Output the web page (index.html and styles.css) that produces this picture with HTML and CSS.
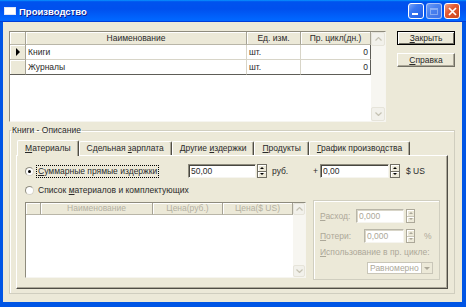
FILE: index.html
```html
<!DOCTYPE html>
<html lang="ru">
<head>
    <meta charset="UTF-8">
    <meta name="viewport" content="width=device-width, initial-scale=1.0">
    <title>Производство</title>
    <link rel="stylesheet" href="styles.css">
</head>
<body>

<div class="window">
    <div class="titlebar">
        <span class="app-icon"></span>
        <span class="title">Производство</span>
        <div class="caption-buttons">
            <span class="cap-btn cap-min"><span class="min-bar"></span></span>
            <span class="cap-btn cap-max"><span class="max-box"></span></span>
            <span class="cap-btn cap-close">
                <svg width="9" height="9" viewBox="0 0 9 9"><path d="M1 1L8 8M8 1L1 8" stroke="#fff" stroke-width="1.7"/></svg>
            </span>
        </div>
    </div>

    <div class="client">
        <!-- products grid + buttons -->
        <div class="top-row">
            <div class="dbgrid main-grid">
                <div class="grid-cells">
                    <div class="grid-table main-cols">
                        <div class="hcell"></div>
                        <div class="hcell">Наименование</div>
                        <div class="hcell">Ед. изм.</div>
                        <div class="hcell">Пр. цикл(дн.)</div>

                        <div class="icell"><span class="row-arrow"></span></div>
                        <div class="dcell">Книги</div>
                        <div class="dcell">шт.</div>
                        <div class="dcell num last">0</div>

                        <div class="icell lastrow"></div>
                        <div class="dcell lastrow">Журналы</div>
                        <div class="dcell lastrow">шт.</div>
                        <div class="dcell num last lastrow">0</div>
                    </div>
                </div>
                <div class="vscroll">
                    <span class="sb-btn"><svg width="7" height="4" viewBox="0 0 7 4"><path d="M0.5 3.5L3.5 0.5L6.5 3.5" fill="none" stroke="#c5c2b3" stroke-width="1.2"/></svg></span>
                    <span class="sb-track"></span>
                    <span class="sb-btn"><svg width="7" height="4" viewBox="0 0 7 4"><path d="M0.5 0.5L3.5 3.5L6.5 0.5" fill="none" stroke="#c5c2b3" stroke-width="1.2"/></svg></span>
                </div>
            </div>
            <div class="side-buttons">
                <button class="btn btn-default"><u>З</u>акрыть</button>
                <button class="btn"><u>С</u>правка</button>
            </div>
        </div>

        <!-- description -->
        <fieldset class="groupbox">
            <legend>Книги - Описание</legend>
            <div class="tabs">
                <span class="tab active"><u>М</u>атериалы</span>
                <span class="tab">Сдельная <u>з</u>арплата</span>
                <span class="tab">Другие <u>и</u>здержки</span>
                <span class="tab"><u>П</u>родукты</span>
                <span class="tab"><u>Г</u>рафик производства</span>
            </div>
            <div class="tab-page">
                <div class="opt-row">
                    <div class="radio-option w-sum">
                        <span class="radio checked"></span>
                        <span class="focus"><u>С</u>уммарные прямые издержки</span>
                    </div>
                    <span class="edit w-rub">50,00</span>
                    <span class="spin"><span class="spin-up"></span><span class="spin-down"></span></span>
                    <span class="unit w-unit">руб.</span>
                    <span class="plus">+</span>
                    <span class="edit w-usd">0,00</span>
                    <span class="spin"><span class="spin-up"></span><span class="spin-down"></span></span>
                    <span class="unit">$ US</span>
                </div>

                <div class="opt-row row-list">
                    <div class="radio-option">
                        <span class="radio"></span>
                        <span class="plain">Список <u>м</u>атериалов и комплектующих</span>
                    </div>
                </div>

                <div class="materials">
                    <div class="dbgrid sub-grid">
                        <div class="grid-cells">
                            <div class="grid-table sub-cols">
                                <div class="hcell"></div>
                                <div class="hcell dim">Наименование</div>
                                <div class="hcell dim">Цена(руб.)</div>
                                <div class="hcell dim">Цена($ US)</div>
                            </div>
                        </div>
                        <div class="vscroll small">
                            <span class="sb-btn"><svg width="7" height="4" viewBox="0 0 7 4"><path d="M0.5 3.5L3.5 0.5L6.5 3.5" fill="none" stroke="#c5c2b3" stroke-width="1.2"/></svg></span>
                            <span class="sb-track"></span>
                            <span class="sb-btn"><svg width="7" height="4" viewBox="0 0 7 4"><path d="M0.5 0.5L3.5 3.5L6.5 0.5" fill="none" stroke="#c5c2b3" stroke-width="1.2"/></svg></span>
                        </div>
                    </div>

                    <div class="usage-box">
                        <div class="rg-row">
                            <span class="rg-label w-rashod"><u>Р</u>асход:</span>
                            <span class="edit disabled w-rashod-in">0,000</span>
                            <span class="spin disabled"><span class="spin-up"></span><span class="spin-down"></span></span>
                        </div>
                        <div class="rg-row row-loss">
                            <span class="rg-label w-loss"><u>П</u>отери:</span>
                            <span class="edit disabled w-loss-in">0,000</span>
                            <span class="spin disabled"><span class="spin-up"></span><span class="spin-down"></span></span>
                            <span class="rg-label pct">%</span>
                        </div>
                        <div class="rg-label usage-label"><u>И</u>спользование в пр. цикле:</div>
                        <div class="combo">
                            <span class="combo-text">Равномерно</span>
                            <span class="combo-btn"></span>
                        </div>
                    </div>
                </div>
            </div>
        </fieldset>
    </div>
</div>

</body>
</html>
```

FILE: styles.css
```css
body {
    margin: 0;
    background: #fff;
    font-family: 'Liberation Sans', Arial, sans-serif;
    font-size: 8.5px;
    color: #2a2a2a;
}

/* window frame */
.window {
    width: 466px;
    height: 307px;
    display: flex;
    flex-direction: column;
    background: #0055e5;
}
.titlebar {
    flex: none;
    height: 22px;
    display: flex;
    align-items: center;
    padding: 0 6px 0 4px;
    background: linear-gradient(180deg, #0997ff, #0053ee 8%, #0050ee 40%, #0066ff 88%, #0066ff 93%, #005bff 95%, #003dd7 96%, #003dd7);
}
.app-icon {
    width: 12px;
    height: 8px;
    background: #fff;
    border: 1px solid #dfe6f7;
    box-sizing: border-box;
}
.title {
    margin-left: 3px;
    color: #fff;
    font-weight: bold;
    font-size: 9.5px;
    text-shadow: 1px 1px 0 #0f1b8a;
}
.caption-buttons {
    margin-left: auto;
    display: flex;
    gap: 2px;
}
.cap-btn {
    width: 16px;
    height: 16px;
    box-sizing: border-box;
    border: 1px solid #fff;
    border-radius: 3px;
    display: flex;
    align-items: center;
    justify-content: center;
    background: linear-gradient(135deg, #7ea6f7 0%, #3a78f2 35%, #1e5ce4 100%);
}
.cap-min {
    align-items: flex-end;
    justify-content: flex-start;
    padding: 0 0 3px 3px;
}
.min-bar {
    width: 6px;
    height: 2px;
    background: #fff;
}
.cap-max {
    border-color: rgba(255, 255, 255, 0.55);
    background: linear-gradient(135deg, #6f9cf5 0%, #4a82f0 40%, #3b70e6 100%);
}
.max-box {
    width: 8px;
    height: 7px;
    box-sizing: border-box;
    border: 1px solid rgba(255, 255, 255, 0.35);
    border-top-width: 2px;
}
.cap-close {
    background: linear-gradient(135deg, #f0a088 0%, #e35a31 40%, #c9461b 100%);
}

.client {
    flex: 1;
    margin: 0 4px 5px 3px;
    background: #ece9d8;
    padding: 9px 6px 0 6px;
}

/* grids */
.top-row {
    display: flex;
    height: 91px;
}
.dbgrid {
    box-sizing: border-box;
    display: flex;
    border: 1px solid;
    border-color: #8e8b7d #f6f5f0 #f6f5f0 #8e8b7d;
    background: #fff;
}
.main-grid {
    width: 377px;
    height: 91px;
}
.sub-grid {
    width: 281px;
    height: 76px;
    margin: 2px 0 0 1px;
}
.grid-cells {
    flex: 1;
}
.grid-table {
    display: grid;
}
.main-cols {
    grid-template-columns: 16px 221px 54px 70px;
    grid-template-rows: 13px 15px 15px;
}
.sub-cols {
    grid-template-columns: 15px 112px 70px 70px;
    grid-template-rows: 12px;
}
.hcell, .icell {
    background: #ece9d8;
    box-sizing: border-box;
    border-right: 1px solid #a5a294;
    border-bottom: 1px solid #b9b6a8;
    box-shadow: inset 1px 1px 0 #fff;
    text-align: center;
    line-height: 12px;
    white-space: nowrap;
    overflow: hidden;
}
.sub-cols .hcell {
    line-height: 11px;
}
.hcell.dim {
    color: #b3b0a2;
}
.icell {
    display: flex;
    align-items: center;
    justify-content: center;
}
.row-arrow {
    width: 0;
    height: 0;
    border-top: 4px solid transparent;
    border-bottom: 4px solid transparent;
    border-left: 4px solid #000;
}
.dcell {
    box-sizing: border-box;
    border-right: 1px solid #d8d5c8;
    border-bottom: 1px solid #d8d5c8;
    padding-left: 2px;
    line-height: 14px;
    white-space: nowrap;
}
.dcell.num {
    text-align: right;
    padding: 0 2px 0 0;
}
.dcell.last {
    border-right-color: #5e5d57;
}
.lastrow {
    border-bottom-color: #5e5d57;
}

.vscroll {
    width: 14px;
    display: flex;
    flex-direction: column;
    background: #f7f6f1;
}
.vscroll.small {
    width: 12px;
}
.sb-btn {
    height: 14px;
    flex: none;
    box-sizing: border-box;
    border: 1px solid #e6e4da;
    border-radius: 2px;
    background: #f2f1eb;
    display: flex;
    align-items: center;
    justify-content: center;
}
.small .sb-btn {
    height: 12px;
}
.sb-track {
    flex: 1;
}

/* buttons */
.side-buttons {
    margin-left: 11px;
    display: flex;
    flex-direction: column;
    gap: 8px;
}
.btn {
    width: 58px;
    height: 14px;
    padding: 0;
    font: inherit;
    color: #2a2a2a;
    background: #ece9d8;
    border: 1px solid;
    border-color: #fff #716f64 #716f64 #fff;
    box-shadow: inset -1px -1px 0 #aca899;
    line-height: 11px;
}
.btn-default {
    border-color: #000;
    box-shadow: inset 1px 1px 0 #fff, inset -1px -1px 0 #716f64;
}

/* group box with tabs */
.groupbox {
    margin: 3px 0 0;
    min-width: 0;
    width: 446px;
    box-sizing: border-box;
    padding: 3px 6px 4px 6px;
    border: 1px solid #d0cebf;
    box-shadow: inset 1px 1px 0 #fff;
}
.groupbox legend {
    margin-left: -5px;
    padding: 0 1px;
    line-height: 11px;
}
.tabs {
    display: flex;
    align-items: flex-end;
    height: 16px;
    padding-left: 1px;
}
.tab {
    height: 14px;
    box-sizing: border-box;
    padding: 0 7px;
    line-height: 13px;
    white-space: nowrap;
    border-top: 1px solid #fff;
    border-left: 1px solid #fff;
    border-right: 1px solid #4f4d45;
    border-radius: 2px 2px 0 0;
    box-shadow: inset -1px 0 0 #aca899;
}
.tab.active {
    height: 16px;
    margin-bottom: -1px;
    position: relative;
    background: #ece9d8;
    line-height: 15px;
}
.tab-page {
    height: 134px;
    box-sizing: border-box;
    border: 1px solid;
    border-color: #fff #4f4d45 #4f4d45 #fff;
    box-shadow: inset -1px -1px 0 #aca899;
    padding: 8px 7px 0 7px;
}

.opt-row {
    display: flex;
    align-items: center;
    height: 14px;
}
.row-list {
    margin-top: 6px;
    height: 12px;
}
.radio-option {
    display: flex;
    align-items: center;
}
.w-sum {
    width: 164px;
}
.radio {
    width: 9px;
    height: 9px;
    margin-left: 1px;
    box-sizing: border-box;
    border-radius: 50%;
    border: 1px solid #918f82;
    border-right-color: #d6d4c8;
    border-bottom-color: #d6d4c8;
    background: #fff;
    display: flex;
    align-items: center;
    justify-content: center;
}
.radio.checked::after {
    content: '';
    width: 3px;
    height: 3px;
    border-radius: 50%;
    background: #000;
}
.focus {
    margin-left: 2px;
    padding: 0 1px;
    border: 1px dotted #000;
    line-height: 11px;
    white-space: nowrap;
}
.plain {
    margin-left: 3px;
    padding-left: 1px;
    white-space: nowrap;
}

.edit {
    height: 14px;
    box-sizing: border-box;
    border: 1px solid;
    border-color: #8e8b7d #f6f5f0 #f6f5f0 #8e8b7d;
    box-shadow: inset 1px 1px 0 #474640;
    background: #fff;
    padding-left: 2px;
    line-height: 12px;
}
.w-rub {
    width: 68px;
}
.w-usd {
    width: 69px;
    margin-left: 2px;
}
.edit.disabled {
    color: #aca899;
    border-color: #b9b6a8 #f6f5f0 #f6f5f0 #b9b6a8;
    box-shadow: inset 1px 1px 0 #d8d5c8;
}
.spin {
    width: 10px;
    height: 14px;
    margin-left: 1px;
    display: flex;
    flex-direction: column;
    box-sizing: border-box;
    border: 1px solid #716f64;
}
.spin span {
    flex: 1;
    background: #ece9d8;
    box-shadow: inset 1px 1px 0 #fff;
    display: flex;
    align-items: center;
    justify-content: center;
}
.spin .spin-up {
    border-bottom: 1px solid #716f64;
}
.spin-up::after, .spin-down::after {
    content: '';
    border-left: 2px solid transparent;
    border-right: 2px solid transparent;
}
.spin-up::after {
    border-bottom: 2px solid #000;
}
.spin-down::after {
    border-top: 2px solid #000;
}
.spin.disabled {
    width: 9px;
    margin-left: 2px;
    border-color: #aca899;
}
.spin.disabled .spin-up {
    border-bottom-color: #c9c6b8;
}
.spin.disabled .spin-up::after {
    border-bottom-color: #aca899;
}
.spin.disabled .spin-down::after {
    border-top-color: #aca899;
}
.unit {
    margin-left: 6px;
    white-space: nowrap;
}
.w-unit {
    margin-left: 5px;
    width: 41px;
}
.plus {
    width: 5px;
    text-align: center;
}

/* materials list + usage */
.materials {
    display: flex;
    align-items: flex-start;
    margin-top: 4px;
}
.usage-box {
    width: 129px;
    height: 80px;
    margin-left: 7px;
    box-sizing: border-box;
    border: 1px solid #d0cebf;
    box-shadow: inset 1px 1px 0 #fff;
    padding: 8px 0 0 6px;
}
.rg-row {
    display: flex;
    align-items: center;
    height: 14px;
}
.row-loss {
    margin-top: 6px;
}
.rg-label {
    color: #aca899;
    white-space: nowrap;
}
.w-rashod {
    width: 36px;
}
.w-loss {
    width: 44px;
}
.w-rashod-in {
    width: 48px;
}
.w-loss-in {
    width: 40px;
}
.pct {
    margin-left: 9px;
}
.usage-label {
    margin-top: 4px;
    line-height: 11px;
}
.combo {
    margin: 4px 0 0 47px;
    width: 66px;
    height: 12px;
    box-sizing: border-box;
    border: 1px solid #c9c6b8;
    background: #fff;
    display: flex;
}
.combo-text {
    flex: 1;
    color: #aca899;
    padding-left: 2px;
    line-height: 10px;
}
.combo-btn {
    width: 10px;
    background: #ece9d8;
    border-left: 1px solid #c9c6b8;
    display: flex;
    align-items: center;
    justify-content: center;
}
.combo-btn::after {
    content: '';
    border-left: 3px solid transparent;
    border-right: 3px solid transparent;
    border-top: 3px solid #aca899;
}
```
